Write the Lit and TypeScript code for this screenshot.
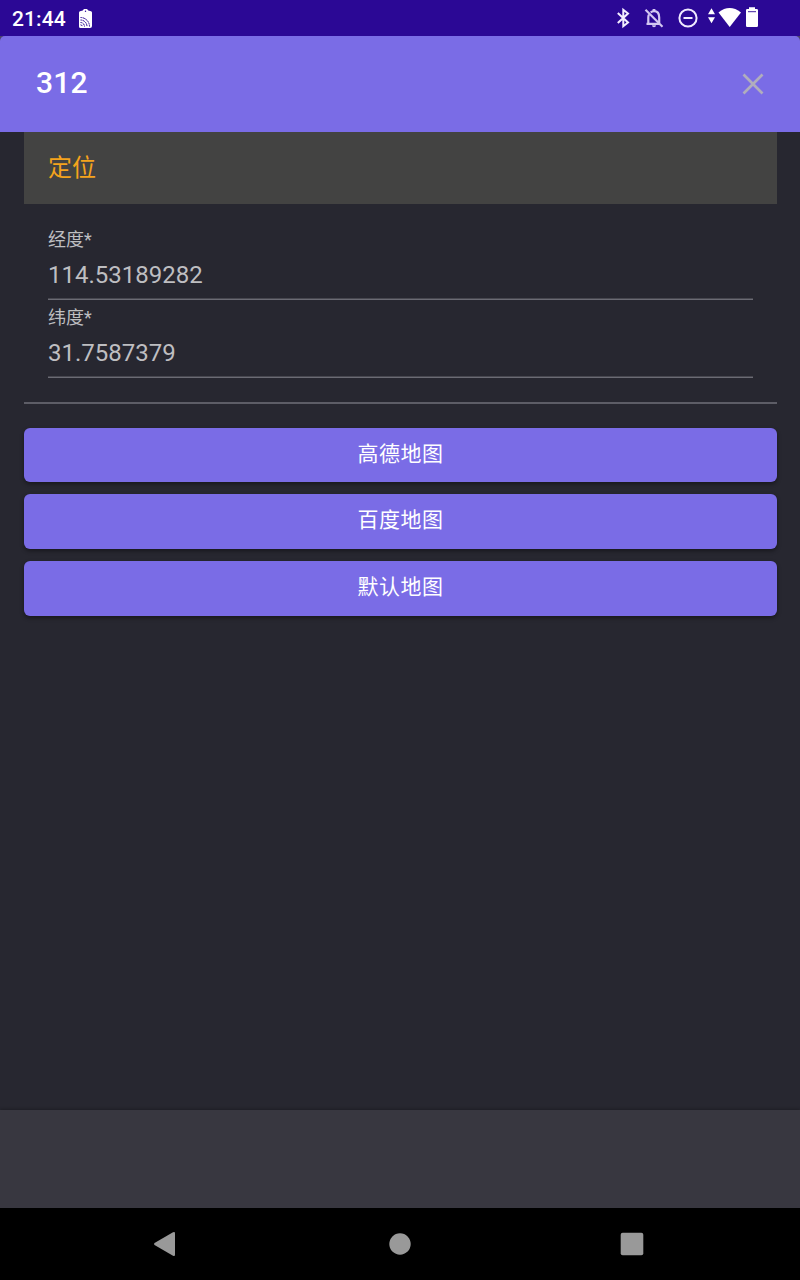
import { LitElement, html, css, svg } from "lit";
import { customElement, property } from "lit/decorators.js";

@customElement("status-bar")
class StatusBar extends LitElement {
  static styles = css`
    :host {
      display: flex;
      box-sizing: border-box;
      height: 36px;
      padding: 0 41px 0 12px;
      align-items: center;
      justify-content: space-between;
      background: #2b0895;
      color: #fff;
    }
    .group { display: flex; align-items: center; height: 36px; }
    .time { font-size: 21px; font-weight: 500; line-height: 36px; padding-top: 2px; width: 66px; letter-spacing: 0.1px; }
    svg { display: block; }
  `;
  render() {
    return html`
      <div class="group">
        <span class="time">21:44</span>
        <svg width="16" height="36" viewBox="78 0 16 36">
          <path d="M80 11.300l2.700-.8 1.300-1.500h3l1.300 1.500 2.700.8q1 .3 1 1.500v13.200q0 2-2 2h-9.500q-1.500 0-1.500-1.500v-13.700q0-1.200 1-1.500z" fill="#fff"/>
          <path d="M80.500 17.500a9 9 0 0 1 9 9M80.500 20a6.500 6.500 0 0 1 6.500 6.500M80.500 22.500a4 4 0 0 1 4 4M80.500 24.800a1.800 1.800 0 0 1 1.800 1.800" fill="none" stroke="#2b0895" stroke-width="1" stroke-dasharray="2 .5"/>
          <circle cx="85.500" cy="11.300" r=".7" fill="#2b0895"/>
        </svg>
      </div>
      <svg width="146" height="36" viewBox="613 0 146 36">
        ${svg`
        <path d="M617.800 13l10.200 9.500-4.700 3.700v-16.400l4.700 3.700-10.200 9.500" fill="none" stroke="#f4efff" stroke-width="2"/>
        <g fill="none" stroke="#d3c7f2" stroke-width="2.200">
          <path d="M649 14.500q-.7 1.200-.7 3v6.500M646.500 23.800h13.500M650.700 12.500q1.400-1.300 3.300-1.300 5.200 0 5.200 6.300v5.500"/>
          <path d="M645.500 9.700l17 17"/>
        </g>
        <path d="M652.600 9h2.800v2.500h-2.800zM652 25.200h4q0 2-2 2t-2-2z" fill="#d3c7f2"/>
        <circle cx="688" cy="18" r="8.600" fill="none" stroke="#f0eaff" stroke-width="2"/>
        <path d="M683.500 18h9" stroke="#f0eaff" stroke-width="2"/>
        <path d="M711.500 8.200l3.500 6h-7zM711.500 23.300l3.500-6h-7z" fill="#fff"/>
        <path d="M718.500 12.400q11-8.600 22.500 0l-11.300 14.700z" fill="#fff"/>
        <path d="M749 9v-1.700h6v1.700h1.700q1.300 0 1.300 1.300v15.400q0 1.300-1.300 1.300h-9.400q-1.300 0-1.300-1.300v-15.400q0-1.300 1.300-1.300z" fill="#fff"/>
        <path d="M748 11.700h8" stroke="#2b0895" stroke-width=".9"/>`}
      </svg>
    `;
  }
}

@customElement("value-field")
class ValueField extends LitElement {
  @property() label = "";
  @property() value = "";
  static styles = css`
    :host {
      display: flex;
      flex-direction: column;
      box-sizing: border-box;
      height: 78px;
      color: #bebec1;
      background: linear-gradient(#47474f 50%, #6b6b74 50%) bottom / 100% 2px no-repeat;
    }
    .label { font-size: 18px; line-height: 24px; padding-top: 6px; }
    .value { font-size: 24px; line-height: 30px; padding-top: 8px; }
  `;
  render() {
    return html`<span class="label">${this.label}</span><span class="value">${this.value}</span>`;
  }
}

@customElement("app-root")
class AppRoot extends LitElement {
  static styles = css`
    :host {
      display: flex;
      flex-direction: column;
      height: 1280px;
      background: #272730;
      font-family: Roboto, "Noto Sans CJK SC", sans-serif;
    }
    .top { background: #4b436e; }
    .header {
      display: flex;
      box-sizing: border-box;
      height: 96px;
      padding: 0 36px;
      align-items: center;
      justify-content: space-between;
      background: #7a6ce6;
      border-radius: 5px 5px 0 0;
    }
    .title { color: #fff; font-size: 30px; font-weight: 500; letter-spacing: 0.2px; line-height: 40px; padding-bottom: 2px; }
    .main { flex: 1; padding: 0 23px 0 24px; }
    .section { height: 72px; line-height: 72px; padding-left: 24px; background: #434342; color: #f5a31c; font-size: 24px; }
    .fields { padding: 18px 24px 24px; border-bottom: 2px solid #5d5d66; }
    .buttons { display: flex; flex-direction: column; gap: 12px; padding-top: 23.8px; }
    .button {
      display: block;
      box-sizing: border-box;
      height: 54.59px;
      border-radius: 6px;
      background: #7a6ce6;
      color: #fff;
      font-size: 21px;
      line-height: 52px;
      text-align: center;
      letter-spacing: 0.5px;
      box-shadow: 0 2px 4px rgba(0, 0, 0, 0.4);
    }
    .footer { height: 98px; background: #383740; box-shadow: 0 -1px 3px rgba(0, 0, 0, 0.25); }
    .nav { height: 72px; background: #000; }
    svg { display: block; }
  `;
  render() {
    return html`
      <status-bar></status-bar>
      <div class="top">
        <div class="header">
          <span class="title">312</span>
          <svg width="22" height="22" viewBox="0 0 22 22"><path d="M1.500 1.500l19 19M20.500 1.500l-19 19" stroke="#b0adbd" stroke-width="2.700"/></svg>
        </div>
      </div>
      <div class="main">
        <div class="section">定位</div>
        <div class="fields">
          <value-field label="经度*" value="114.53189282"></value-field>
          <value-field label="纬度*" value="31.7587379"></value-field>
        </div>
        <div class="buttons">
          ${["高德地图", "百度地图", "默认地图"].map((name) => html`<div class="button" role="button" tabindex="0">${name}</div>`)}
        </div>
      </div>
      <div class="footer"></div>
      <div class="nav">
        <svg width="800" height="72" viewBox="0 0 800 72" fill="#999">
          <path d="M154.500 35q-1 1 0 2l18.500 10.700q2 1 2-1v-21.400q0-2-2-1z"/>
          <circle cx="400" cy="36" r="10.700"/>
          <rect x="620.700" y="24.700" width="22.600" height="22.600" rx="2"/>
        </svg>
      </div>
    `;
  }
}
